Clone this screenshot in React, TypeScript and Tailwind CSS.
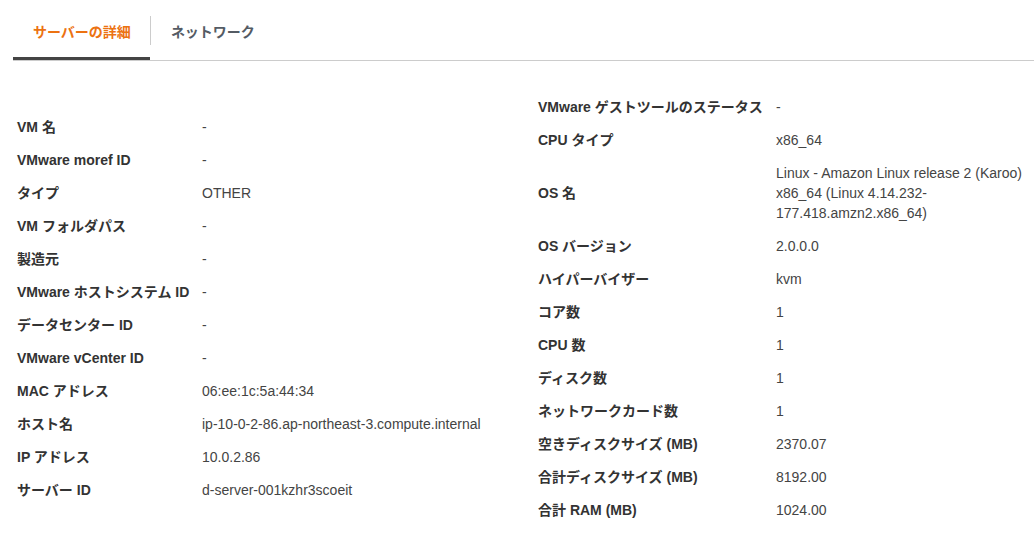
import React from 'react';

const font = { fontFamily: '"Liberation Sans", Arial, "Noto Sans CJK JP", sans-serif' };

type Row = { label: string; value: React.ReactNode };

const left: Row[] = [
  { label: 'VM 名', value: '-' },
  { label: 'VMware moref ID', value: '-' },
  { label: 'タイプ', value: 'OTHER' },
  { label: 'VM フォルダパス', value: '-' },
  { label: '製造元', value: '-' },
  { label: 'VMware ホストシステム ID', value: '-' },
  { label: 'データセンター ID', value: '-' },
  { label: 'VMware vCenter ID', value: '-' },
  { label: 'MAC アドレス', value: '06:ee:1c:5a:44:34' },
  { label: 'ホスト名', value: 'ip-10-0-2-86.ap-northeast-3.compute.internal' },
  { label: 'IP アドレス', value: '10.0.2.86' },
  { label: 'サーバー ID', value: 'd-server-001kzhr3scoeit' },
];

const right: Row[] = [
  { label: 'VMware ゲストツールのステータス', value: '-' },
  { label: 'CPU タイプ', value: 'x86_64' },
  { label: 'OS 名', value: 'Linux - Amazon Linux release 2 (Karoo) x86_64 (Linux 4.14.232-177.418.amzn2.x86_64)' },
  { label: 'OS バージョン', value: '2.0.0.0' },
  { label: 'ハイパーバイザー', value: 'kvm' },
  { label: 'コア数', value: '1' },
  { label: 'CPU 数', value: '1' },
  { label: 'ディスク数', value: '1' },
  { label: 'ネットワークカード数', value: '1' },
  { label: '空きディスクサイズ (MB)', value: '2370.07' },
  { label: '合計ディスクサイズ (MB)', value: '8192.00' },
  { label: '合計 RAM (MB)', value: '1024.00' },
];

function DetailList({ rows, labelWidth }: { rows: Row[]; labelWidth: string }) {
  return (
    <dl className={`grid ${labelWidth} items-center`}>
      {rows.map((r) => (
        <React.Fragment key={r.label}>
          <dt className="py-[6.5px] text-[14px] leading-5 font-bold text-[#333] whitespace-nowrap">{r.label}</dt>
          <dd className="py-[6.5px] text-[14px] leading-5 text-[#444]">{r.value}</dd>
        </React.Fragment>
      ))}
    </dl>
  );
}

export default function App() {
  return (
    <div className="w-[1034px] h-[544px] bg-white overflow-hidden" style={font}>
      <div className="ml-[13px] flex border-b border-[#cccccc] h-[61px]">
        <div className="relative h-[60px] pl-5 pr-[19px] pt-5">
          <span className="text-[14px] leading-5 font-bold text-[#ec7211]">サーバーの詳細</span>
          <div className="absolute left-0 right-0 bottom-0 h-[3px] bg-[#444]" />
        </div>
        <div className="w-px h-[29px] mt-4 bg-[#cccccc]" />
        <div className="h-[60px] pl-[20px] pr-5 pt-5">
          <span className="text-[14px] leading-5 font-bold text-[#545b64]">ネットワーク</span>
        </div>
      </div>

      <div className="pl-[17px] pr-1 pt-[29px] grid grid-cols-[521px_1fr] items-center">
        <DetailList rows={left} labelWidth="grid-cols-[185px_1fr]" />
        <DetailList rows={right} labelWidth="grid-cols-[238px_1fr]" />
      </div>
    </div>
  );
}
